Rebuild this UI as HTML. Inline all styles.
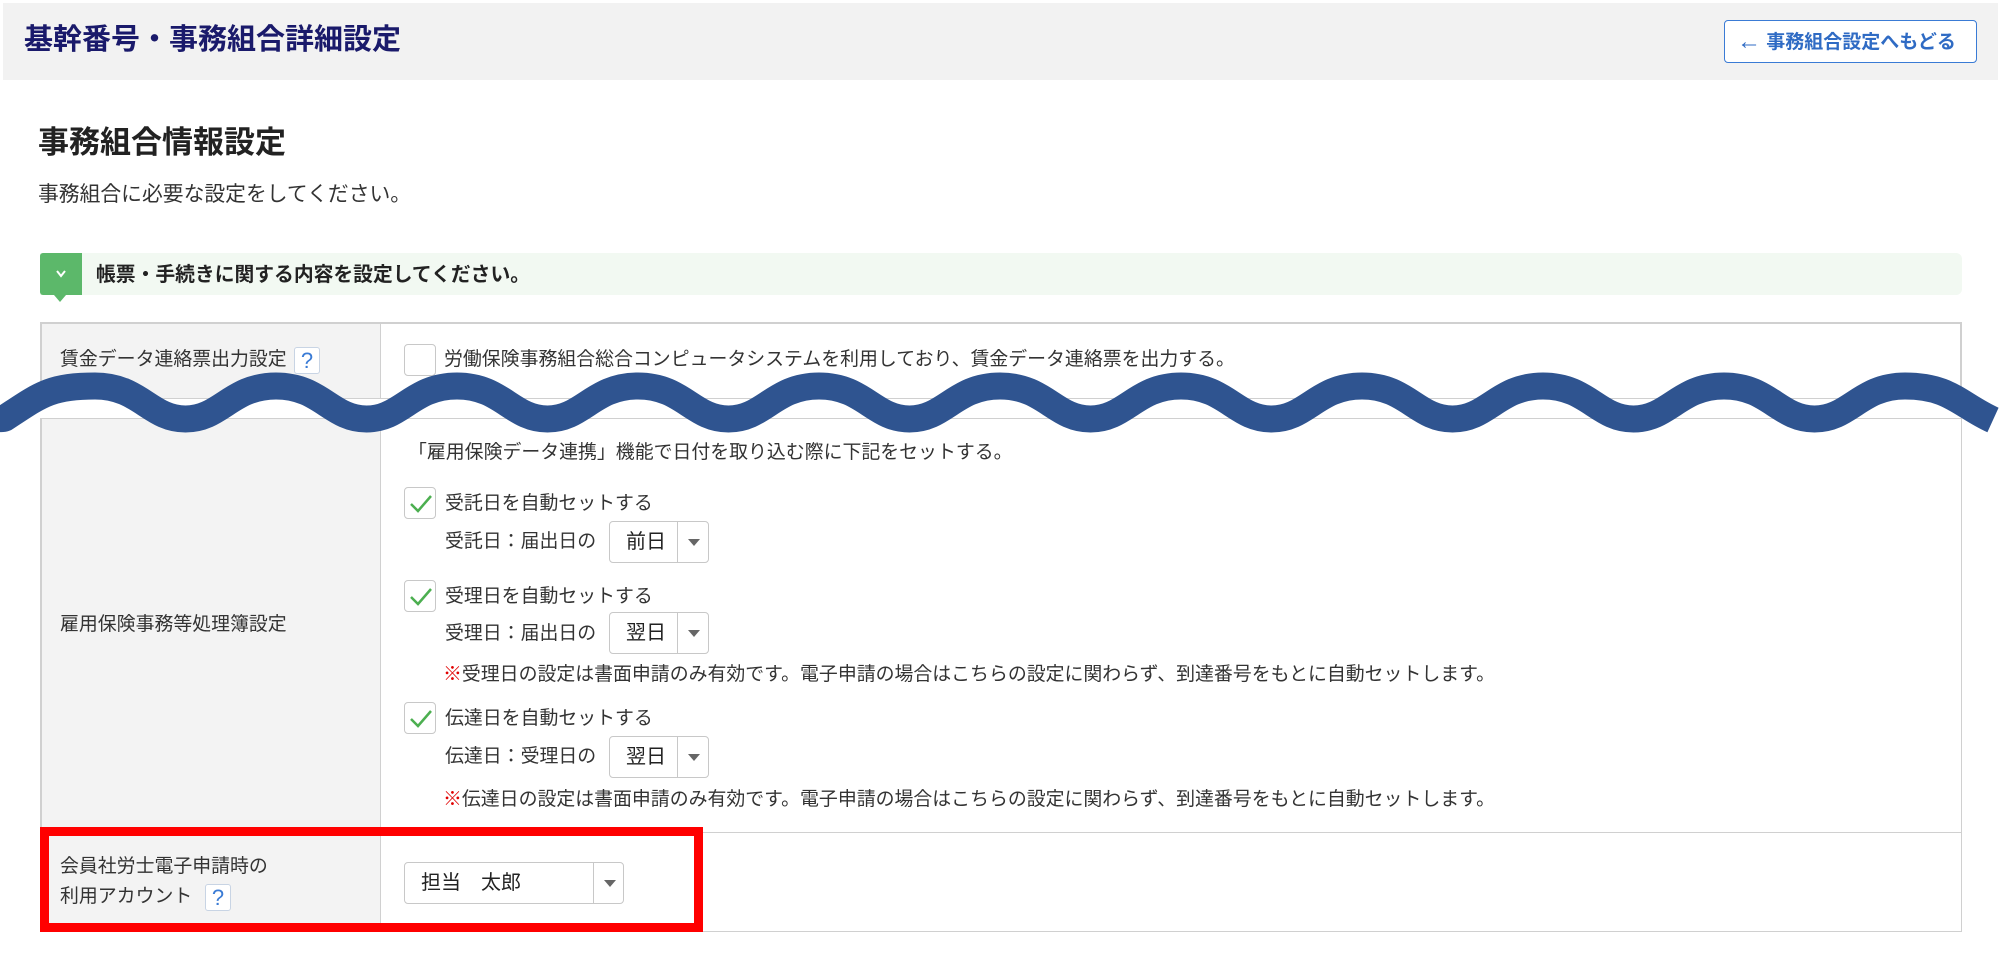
<!DOCTYPE html>
<html><head><meta charset="utf-8"><style>
*{margin:0;padding:0;box-sizing:border-box}
body{width:2000px;height:956px;background:#fff;position:relative;overflow:hidden;font-family:"Liberation Sans","Noto Sans CJK JP",sans-serif;color:#333}
.a{position:absolute;white-space:nowrap}
.t{font-size:18.9px;line-height:1}
.cb{position:absolute;width:32px;height:32px;border:1px solid #c8c8c8;border-radius:4px;background:#fff}
.sel{position:absolute;border:1px solid #c8c8c8;border-radius:4px;background:#fff;height:42px}
.sel .v{position:absolute;left:0;top:0;height:40px;line-height:40px;font-size:20px;color:#222;padding-left:16px}
.sel .d{position:absolute;top:0;bottom:0;width:1px;background:#c8c8c8}
.sel .tri{position:absolute;top:17px;width:0;height:0;border-left:6px solid transparent;border-right:6px solid transparent;border-top:7px solid #666}
.q{position:absolute;width:26px;height:27px;border:1px solid #c8d4e4;border-radius:3px;background:#fff;color:#3a7bd5;font-size:22px;line-height:25px;text-align:center}
.red{color:#e00000}
</style></head><body>
<div class="a" style="left:3px;top:3px;width:1995px;height:77px;background:#f2f2f2"></div>
<div class="a" style="left:24px;top:26px;font-size:29px;font-weight:bold;color:#1a1a6b;line-height:29px">基幹番号・事務組合詳細設定</div>
<div class="a" style="left:1724px;top:20px;width:253px;height:43px;border:1px solid #3a7bd5;border-radius:4px;background:#fff;color:#2f6bc4;font-size:19px;font-weight:bold;line-height:41px;padding-left:12px"><span style="font-size:24px;font-weight:normal;vertical-align:-1px">←</span> 事務組合設定へもどる</div>

<div class="a" style="left:38px;top:127px;font-size:31px;font-weight:bold;color:#222;line-height:31px">事務組合情報設定</div>
<div class="a" style="left:38px;top:185px;font-size:20.8px;color:#333;line-height:20px">事務組合に必要な設定をしてください。</div>

<div class="a" style="left:40px;top:253px;width:1922px;height:42px;background:#f2f9f2;border-radius:0 6px 6px 0"></div>
<div class="a" style="left:40px;top:253px;width:42px;height:42px;background:#5cb86a;border-radius:3px 0 0 3px"></div>
<div class="a" style="left:54px;top:295px;width:0;height:0;border-left:6px solid transparent;border-right:6px solid transparent;border-top:7px solid #5cb86a"></div>
<svg class="a" style="left:55px;top:269px" width="12" height="10"><path d="M2 2 L6 7 L10 2" stroke="#fff" stroke-width="2" fill="none"/></svg>
<div class="a" style="left:96px;top:265px;font-size:19.8px;font-weight:bold;color:#222;line-height:20px">帳票・手続きに関する内容を設定してください。</div>

<!-- row1 -->
<div class="a" style="left:40px;top:322px;width:1922px;height:77px;border:2px solid #d0d0d0;border-bottom:1px solid #d0d0d0"></div>
<div class="a" style="left:42px;top:324px;width:339px;height:74px;background:#f3f3f3;border-right:1px solid #d0d0d0"></div>
<div class="a t" style="left:60px;top:351px">賃金データ連絡票出力設定</div>
<div class="q" style="left:294px;top:347px">?</div>
<div class="cb" style="left:404px;top:344px"></div>
<div class="a t" style="left:444px;top:351px">労働保険事務組合総合コンピュータシステムを利用しており、賃金データ連絡票を出力する。</div>

<!-- row2 -->
<div class="a" style="left:40px;top:418px;width:1922px;height:415px;border-left:2px solid #d0d0d0;border-right:1px solid #d0d0d0;border-top:1px solid #d0d0d0;border-bottom:1px solid #d0d0d0"></div>
<div class="a" style="left:42px;top:419px;width:339px;height:413px;background:#f3f3f3;border-right:1px solid #d0d0d0"></div>
<div class="a t" style="left:60px;top:616px">雇用保険事務等処理簿設定</div>
<div class="a t" style="left:408px;top:444px">「雇用保険データ連携」機能で日付を取り込む際に下記をセットする。</div>

<div class="cb" style="left:404px;top:487px"></div>
<svg class="a" style="left:408px;top:493px" width="26" height="22"><path d="M3 11 L10 18 L23 3" stroke="#4caf50" stroke-width="2.5" fill="none"/></svg>
<div class="a t" style="left:445px;top:495px">受託日を自動セットする</div>
<div class="a t" style="left:445px;top:533px">受託日：届出日の</div>
<div class="sel" style="left:609px;top:521px;width:100px"><span class="v">前日</span><i class="d" style="left:67px"></i><i class="tri" style="left:78px"></i></div>

<div class="cb" style="left:404px;top:580px"></div>
<svg class="a" style="left:408px;top:586px" width="26" height="22"><path d="M3 11 L10 18 L23 3" stroke="#4caf50" stroke-width="2.5" fill="none"/></svg>
<div class="a t" style="left:445px;top:588px">受理日を自動セットする</div>
<div class="a t" style="left:445px;top:625px">受理日：届出日の</div>
<div class="sel" style="left:609px;top:612px;width:100px"><span class="v">翌日</span><i class="d" style="left:67px"></i><i class="tri" style="left:78px"></i></div>
<div class="a t" style="left:443px;top:666px"><span class="red">※</span>受理日の設定は書面申請のみ有効です。電子申請の場合はこちらの設定に関わらず、到達番号をもとに自動セットします。</div>

<div class="cb" style="left:404px;top:702px"></div>
<svg class="a" style="left:408px;top:708px" width="26" height="22"><path d="M3 11 L10 18 L23 3" stroke="#4caf50" stroke-width="2.5" fill="none"/></svg>
<div class="a t" style="left:445px;top:710px">伝達日を自動セットする</div>
<div class="a t" style="left:445px;top:748px">伝達日：受理日の</div>
<div class="sel" style="left:609px;top:736px;width:100px"><span class="v">翌日</span><i class="d" style="left:67px"></i><i class="tri" style="left:78px"></i></div>
<div class="a t" style="left:443px;top:791px"><span class="red">※</span>伝達日の設定は書面申請のみ有効です。電子申請の場合はこちらの設定に関わらず、到達番号をもとに自動セットします。</div>

<!-- row3 -->
<div class="a" style="left:40px;top:832px;width:1922px;height:100px;border-left:2px solid #d0d0d0;border-right:1px solid #d0d0d0;border-bottom:1px solid #d0d0d0"></div>
<div class="a" style="left:42px;top:833px;width:339px;height:98px;background:#f3f3f3;border-right:1px solid #d0d0d0"></div>
<div class="a t" style="left:60px;top:858px">会員社労士電子申請時の</div>
<div class="a t" style="left:60px;top:888px">利用アカウント</div>
<div class="q" style="left:205px;top:884px">?</div>
<div class="sel" style="left:404px;top:862px;width:220px"><span class="v">担当　太郎</span><i class="d" style="left:188px"></i><i class="tri" style="left:199px"></i></div>
<div class="a" style="left:40px;top:827px;width:663px;height:105px;border:9px solid #ff0000"></div>

<svg class="a" style="left:0;top:0" width="2000" height="956">
<path d="M-10 416 Q0 420 5 418 C40 395 50 386 95 386 C140 386 150 419 185.5 419 C221 419 231 386 276 386 C321 386 331 419 366.5 419 C402 419 412 386 457 386 C502 386 512 419 547.5 419 C583 419 593 386 638 386 C683 386 693 419 728.5 419 C764 419 774 386 819 386 C864 386 874 419 909.5 419 C945 419 955 386 1000 386 C1045 386 1055 419 1090.5 419 C1126 419 1136 386 1181 386 C1226 386 1236 419 1271.5 419 C1307 419 1317 386 1362 386 C1407 386 1417 419 1452.5 419 C1488 419 1498 386 1543 386 C1588 386 1598 419 1633.5 419 C1669 419 1679 386 1724 386 C1769 386 1779 419 1814.5 419 C1850 419 1860 386 1905 386 C1950 386 1960 405 1993 420" stroke="#2f5490" stroke-width="27" fill="none"/>
</svg>
</body></html>
